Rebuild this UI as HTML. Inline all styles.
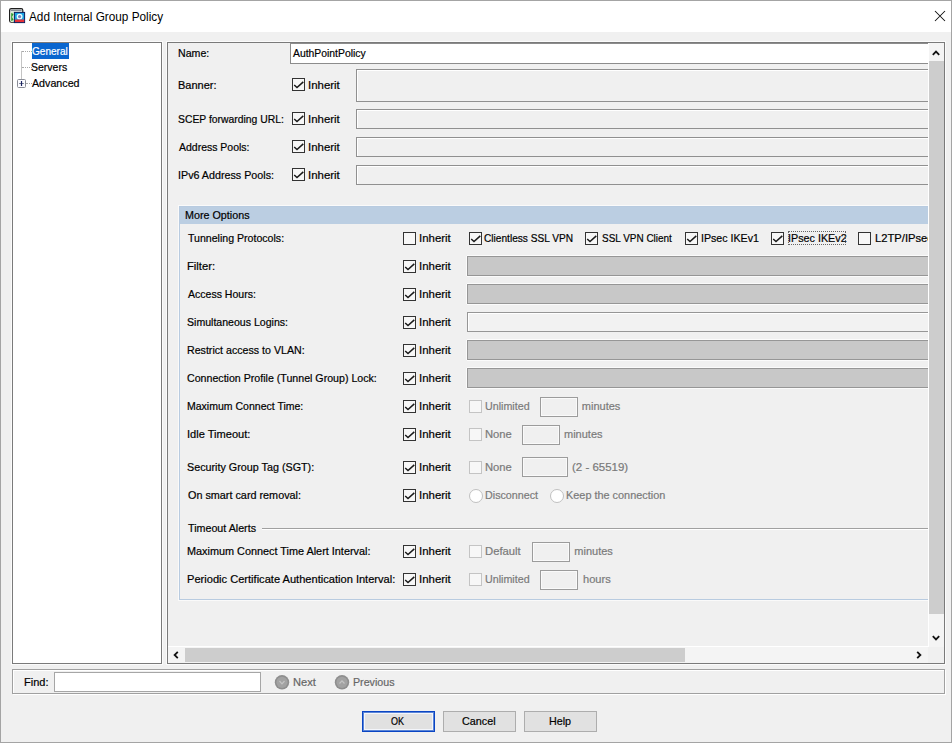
<!DOCTYPE html>
<html><head><meta charset="utf-8"><style>
html,body{margin:0;padding:0;width:952px;height:743px;overflow:hidden;background:#f0f0f0}
body{position:relative;font-family:"Liberation Sans",sans-serif}
.b{position:absolute;box-sizing:border-box}
.t{position:absolute;transform-origin:0 0;-webkit-text-stroke:0.2px currentColor;font-size:11px;line-height:13px;white-space:nowrap;color:#000}
.cb{position:absolute;width:13px;height:13px;box-sizing:border-box;border:1px solid #333;background:#f7f7f7}
.cb.dis{border-color:#c4c4c4;background:#f7f7f7}
.rd{position:absolute;width:14px;height:14px;box-sizing:border-box;border:1px solid #c0c0c0;border-radius:50%;background:#fff}
</style></head><body>
<div class="b" style="left:0px;top:0px;width:952px;height:743px;border:1px solid #a4a4a4;background:#f0f0f0"></div>
<div class="b" style="left:1px;top:1px;width:950px;height:31px;background:#fff"></div>
<svg style="position:absolute;left:9px;top:8px" width="17" height="16" viewBox="0 0 17 16">
<rect x="0.6" y="0.6" width="13.2" height="13.6" rx="1.6" fill="#f2f6f2" stroke="#1e1e1e" stroke-width="1.2"/>
<rect x="1.6" y="1.6" width="11" height="1.6" fill="#8a8f98"/>
<path d="M1.6 4 H4.8 V14 H1.6 Z" fill="#d8f0d0"/>
<path d="M2.2 5 L4.6 6 L3 9 L4.6 12 L2.2 13 Z" fill="#2e9a2e"/>
<rect x="5.4" y="4.4" width="10.2" height="10.2" fill="#1ea4e4" stroke="#0b1d5e" stroke-width="1"/>
<circle cx="10.6" cy="8.6" r="2.3" fill="#7a7fc0" stroke="#e6ffff" stroke-width="1.3"/>
<rect x="6" y="11.5" width="9.2" height="2.6" fill="#e63038"/>
</svg>
<div class="t" style="left:29px;top:9.5px;color:#000;font-size:12px;line-height:15px;-webkit-text-stroke:0;transform:scaleX(0.980);">Add Internal Group Policy</div>
<svg style="position:absolute;left:934px;top:10px" width="12" height="12"><path d="M1 1 L11 11 M11 1 L1 11" stroke="#111" stroke-width="1.05"/></svg>
<div class="b" style="left:12px;top:42px;width:150px;height:622px;border:1px solid #7a7a7a;background:#fff;box-shadow:0 0 0 1px #fbfbfb"></div>
<div class="b" style="left:32px;top:43px;width:37px;height:16px;background:#0a66cf"></div>
<div class="t" style="left:32px;top:45px;color:#fff;transform:scaleX(0.915);">General</div>
<div class="t" style="left:31px;top:61px;transform:scaleX(0.954);">Servers</div>
<div class="t" style="left:32px;top:77px;transform:scaleX(0.971);">Advanced</div>
<div class="b" style="left:21px;top:51px;width:1px;height:28px;background:#c4c4c4"></div>
<div class="b" style="left:22px;top:51px;width:10px;height:1px;border-top:1px dotted #a8a8a8"></div>
<div class="b" style="left:22px;top:67px;width:10px;height:1px;border-top:1px dotted #a8a8a8"></div>
<div class="b" style="left:26px;top:83px;width:6px;height:1px;border-top:1px dotted #a8a8a8"></div>
<svg style="position:absolute;left:17px;top:79px" width="9" height="9"><rect x="0.5" y="0.5" width="8" height="8" rx="1" fill="#fbfbff" stroke="#8a8d96"/><path d="M2.2 4.5 H6.8" stroke="#6a7690" stroke-width="1"/><path d="M4.5 2 V7" stroke="#1c2360" stroke-width="1.2"/></svg>
<div class="b" style="left:167px;top:42px;width:778px;height:622px;border:1px solid #7a7a7a;background:#f0f0f0;box-shadow:0 0 0 1px #fbfbfb"></div>
<div style="position:absolute;left:168px;top:43px;width:760px;height:603px;overflow:hidden"><div style="position:absolute;left:-168px;top:-43px;width:952px;height:743px">
<div class="t" style="left:178px;top:47px;transform:scaleX(0.965);">Name:</div>
<div class="b" style="left:290px;top:43px;width:651px;height:21px;background:#fff;border:1px solid #8c8c8c"></div>
<div class="t" style="left:293px;top:47px;transform:scaleX(0.943);">AuthPointPolicy</div>
<div class="t" style="left:178px;top:79px;">Banner:</div>
<div class="cb" style="left:292px;top:78px"><svg width="13" height="13" style="position:absolute;left:0;top:0"><path d="M1.2 6 L4 8.5 L10.3 2.9" fill="none" stroke="#1a1a1a" stroke-width="1.5"/></svg></div>
<div class="t" style="left:308px;top:79px;transform:scaleX(1.040);">Inherit</div>
<div class="b" style="left:356px;top:69px;width:585px;height:33px;background:#f0f0f0;border:1px solid #909090;box-shadow:inset 1px 1px 0 #fff"></div>
<div class="t" style="left:178px;top:113px;transform:scaleX(0.942);">SCEP forwarding URL:</div>
<div class="cb" style="left:292px;top:112px"><svg width="13" height="13" style="position:absolute;left:0;top:0"><path d="M1.2 6 L4 8.5 L10.3 2.9" fill="none" stroke="#1a1a1a" stroke-width="1.5"/></svg></div>
<div class="t" style="left:308px;top:113px;transform:scaleX(1.040);">Inherit</div>
<div class="b" style="left:356px;top:109px;width:585px;height:20px;background:#f0f0f0;border:1px solid #909090;box-shadow:inset 1px 1px 0 #fff"></div>
<div class="t" style="left:179px;top:141px;transform:scaleX(0.953);">Address Pools:</div>
<div class="cb" style="left:292px;top:140px"><svg width="13" height="13" style="position:absolute;left:0;top:0"><path d="M1.2 6 L4 8.5 L10.3 2.9" fill="none" stroke="#1a1a1a" stroke-width="1.5"/></svg></div>
<div class="t" style="left:308px;top:141px;transform:scaleX(1.040);">Inherit</div>
<div class="b" style="left:356px;top:137px;width:585px;height:20px;background:#f0f0f0;border:1px solid #909090;box-shadow:inset 1px 1px 0 #fff"></div>
<div class="t" style="left:178px;top:169px;transform:scaleX(0.975);">IPv6 Address Pools:</div>
<div class="cb" style="left:292px;top:168px"><svg width="13" height="13" style="position:absolute;left:0;top:0"><path d="M1.2 6 L4 8.5 L10.3 2.9" fill="none" stroke="#1a1a1a" stroke-width="1.5"/></svg></div>
<div class="t" style="left:308px;top:169px;transform:scaleX(1.040);">Inherit</div>
<div class="b" style="left:356px;top:165px;width:585px;height:20px;background:#f0f0f0;border:1px solid #909090;box-shadow:inset 1px 1px 0 #fff"></div>
<div class="b" style="left:179px;top:206px;width:782px;height:394px;border:1px solid #b8cbe0;box-shadow:0 0 0 1px #fafafa"></div>
<div class="b" style="left:180px;top:207px;width:781px;height:17px;background:#bbcee2"></div>
<div class="t" style="left:184.5px;top:209px;transform:scaleX(0.977);">More Options</div>
<div class="t" style="left:188px;top:232px;transform:scaleX(0.962);">Tunneling Protocols:</div>
<div class="cb" style="left:403px;top:232px"></div>
<div class="t" style="left:419px;top:232px;transform:scaleX(1.040);">Inherit</div>
<div class="cb" style="left:469px;top:232px"><svg width="13" height="13" style="position:absolute;left:0;top:0"><path d="M1.2 6 L4 8.5 L10.3 2.9" fill="none" stroke="#1a1a1a" stroke-width="1.5"/></svg></div>
<div class="t" style="left:484.2px;top:232px;transform:scaleX(0.921);">Clientless SSL VPN</div>
<div class="cb" style="left:585px;top:232px"><svg width="13" height="13" style="position:absolute;left:0;top:0"><path d="M1.2 6 L4 8.5 L10.3 2.9" fill="none" stroke="#1a1a1a" stroke-width="1.5"/></svg></div>
<div class="t" style="left:601.5px;top:232px;transform:scaleX(0.904);">SSL VPN Client</div>
<div class="cb" style="left:685px;top:232px"><svg width="13" height="13" style="position:absolute;left:0;top:0"><path d="M1.2 6 L4 8.5 L10.3 2.9" fill="none" stroke="#1a1a1a" stroke-width="1.5"/></svg></div>
<div class="t" style="left:701.2px;top:232px;transform:scaleX(0.967);">IPsec IKEv1</div>
<div class="cb" style="left:771px;top:232px"><svg width="13" height="13" style="position:absolute;left:0;top:0"><path d="M1.2 6 L4 8.5 L10.3 2.9" fill="none" stroke="#1a1a1a" stroke-width="1.5"/></svg></div>
<div class="t" style="left:787.8px;top:232px;transform:scaleX(0.979);">IPsec IKEv2</div>
<div class="b" style="left:788px;top:231px;width:58px;height:14px;border:1px dotted #666"></div>
<div class="cb" style="left:858px;top:232px"></div>
<div class="t" style="left:874.5px;top:232px;transform:scaleX(1.018);">L2TP/IPsec</div>
<div class="t" style="left:187px;top:260px;transform:scaleX(1.023);">Filter:</div>
<div class="cb" style="left:403px;top:260px"><svg width="13" height="13" style="position:absolute;left:0;top:0"><path d="M1.2 6 L4 8.5 L10.3 2.9" fill="none" stroke="#1a1a1a" stroke-width="1.5"/></svg></div>
<div class="t" style="left:419px;top:260px;transform:scaleX(1.040);">Inherit</div>
<div class="b" style="left:467px;top:256px;width:494px;height:20px;background:#c8c8c8;border:1px solid #969696;box-shadow:0 1px 0 #fbfbfb, 0 -1px 0 #fbfbfb, -1px 0 0 #fbfbfb"></div>
<div class="t" style="left:188px;top:288px;transform:scaleX(0.957);">Access Hours:</div>
<div class="cb" style="left:403px;top:288px"><svg width="13" height="13" style="position:absolute;left:0;top:0"><path d="M1.2 6 L4 8.5 L10.3 2.9" fill="none" stroke="#1a1a1a" stroke-width="1.5"/></svg></div>
<div class="t" style="left:419px;top:288px;transform:scaleX(1.040);">Inherit</div>
<div class="b" style="left:467px;top:284px;width:494px;height:20px;background:#c8c8c8;border:1px solid #969696;box-shadow:0 1px 0 #fbfbfb, 0 -1px 0 #fbfbfb, -1px 0 0 #fbfbfb"></div>
<div class="t" style="left:187px;top:316px;transform:scaleX(0.960);">Simultaneous Logins:</div>
<div class="cb" style="left:403px;top:316px"><svg width="13" height="13" style="position:absolute;left:0;top:0"><path d="M1.2 6 L4 8.5 L10.3 2.9" fill="none" stroke="#1a1a1a" stroke-width="1.5"/></svg></div>
<div class="t" style="left:419px;top:316px;transform:scaleX(1.040);">Inherit</div>
<div class="b" style="left:467px;top:312px;width:494px;height:20px;background:#f2f2f2;border:1px solid #969696;box-shadow:inset 1px 1px 0 #fff"></div>
<div class="t" style="left:187px;top:344px;transform:scaleX(0.967);">Restrict access to VLAN:</div>
<div class="cb" style="left:403px;top:344px"><svg width="13" height="13" style="position:absolute;left:0;top:0"><path d="M1.2 6 L4 8.5 L10.3 2.9" fill="none" stroke="#1a1a1a" stroke-width="1.5"/></svg></div>
<div class="t" style="left:419px;top:344px;transform:scaleX(1.040);">Inherit</div>
<div class="b" style="left:467px;top:340px;width:494px;height:20px;background:#c8c8c8;border:1px solid #969696;box-shadow:0 1px 0 #fbfbfb, 0 -1px 0 #fbfbfb, -1px 0 0 #fbfbfb"></div>
<div class="t" style="left:187px;top:372px;transform:scaleX(0.966);">Connection Profile (Tunnel Group) Lock:</div>
<div class="cb" style="left:403px;top:372px"><svg width="13" height="13" style="position:absolute;left:0;top:0"><path d="M1.2 6 L4 8.5 L10.3 2.9" fill="none" stroke="#1a1a1a" stroke-width="1.5"/></svg></div>
<div class="t" style="left:419px;top:372px;transform:scaleX(1.040);">Inherit</div>
<div class="b" style="left:467px;top:368px;width:494px;height:20px;background:#c8c8c8;border:1px solid #969696;box-shadow:0 1px 0 #fbfbfb, 0 -1px 0 #fbfbfb, -1px 0 0 #fbfbfb"></div>
<div class="t" style="left:187px;top:400px;transform:scaleX(0.956);">Maximum Connect Time:</div>
<div class="cb" style="left:403px;top:400px"><svg width="13" height="13" style="position:absolute;left:0;top:0"><path d="M1.2 6 L4 8.5 L10.3 2.9" fill="none" stroke="#1a1a1a" stroke-width="1.5"/></svg></div>
<div class="t" style="left:419px;top:400px;transform:scaleX(1.040);">Inherit</div>
<div class="cb dis" style="left:469px;top:400px"></div>
<div class="t" style="left:484.7px;top:400px;color:#7a7a7a;transform:scaleX(0.973);">Unlimited</div>
<div class="b" style="left:540px;top:397px;width:38px;height:20px;background:#f0f0f0;border:1px solid #9c9c9c;box-shadow:inset 0 0 0 1px #fafafa"></div>
<div class="t" style="left:581.8px;top:400px;color:#7a7a7a;">minutes</div>
<div class="t" style="left:187px;top:428px;transform:scaleX(1.007);">Idle Timeout:</div>
<div class="cb" style="left:403px;top:428px"><svg width="13" height="13" style="position:absolute;left:0;top:0"><path d="M1.2 6 L4 8.5 L10.3 2.9" fill="none" stroke="#1a1a1a" stroke-width="1.5"/></svg></div>
<div class="t" style="left:419px;top:428px;transform:scaleX(1.040);">Inherit</div>
<div class="cb dis" style="left:469px;top:428px"></div>
<div class="t" style="left:484.7px;top:428px;color:#7a7a7a;transform:scaleX(1.020);">None</div>
<div class="b" style="left:522px;top:425px;width:38px;height:20px;background:#f0f0f0;border:1px solid #9c9c9c;box-shadow:inset 0 0 0 1px #fafafa"></div>
<div class="t" style="left:564px;top:428px;color:#7a7a7a;">minutes</div>
<div class="t" style="left:187px;top:461px;transform:scaleX(0.978);">Security Group Tag (SGT):</div>
<div class="cb" style="left:403px;top:461px"><svg width="13" height="13" style="position:absolute;left:0;top:0"><path d="M1.2 6 L4 8.5 L10.3 2.9" fill="none" stroke="#1a1a1a" stroke-width="1.5"/></svg></div>
<div class="t" style="left:419px;top:461px;transform:scaleX(1.040);">Inherit</div>
<div class="cb dis" style="left:469px;top:461px"></div>
<div class="t" style="left:484.7px;top:461px;color:#7a7a7a;transform:scaleX(1.020);">None</div>
<div class="b" style="left:522px;top:457px;width:46px;height:20px;background:#f0f0f0;border:1px solid #9c9c9c;box-shadow:inset 0 0 0 1px #fafafa"></div>
<div class="t" style="left:571.7px;top:461px;color:#7a7a7a;transform:scaleX(1.044);">(2 - 65519)</div>
<div class="t" style="left:188px;top:489px;transform:scaleX(0.983);">On smart card removal:</div>
<div class="cb" style="left:403px;top:489px"><svg width="13" height="13" style="position:absolute;left:0;top:0"><path d="M1.2 6 L4 8.5 L10.3 2.9" fill="none" stroke="#1a1a1a" stroke-width="1.5"/></svg></div>
<div class="t" style="left:419px;top:489px;transform:scaleX(1.040);">Inherit</div>
<div class="rd" style="left:469px;top:489px"></div>
<div class="t" style="left:484.7px;top:489px;color:#7a7a7a;transform:scaleX(0.975);">Disconnect</div>
<div class="rd" style="left:550px;top:489px"></div>
<div class="t" style="left:565.5px;top:489px;color:#7a7a7a;transform:scaleX(0.990);">Keep the connection</div>
<div class="t" style="left:188px;top:522px;transform:scaleX(0.973);">Timeout Alerts</div>
<div class="b" style="left:262px;top:528px;width:699px;height:1px;background:#a0a0a0"></div>
<div class="b" style="left:262px;top:529px;width:699px;height:1px;background:#fff"></div>
<div class="t" style="left:187px;top:545px;transform:scaleX(0.987);">Maximum Connect Time Alert Interval:</div>
<div class="cb" style="left:403px;top:545px"><svg width="13" height="13" style="position:absolute;left:0;top:0"><path d="M1.2 6 L4 8.5 L10.3 2.9" fill="none" stroke="#1a1a1a" stroke-width="1.5"/></svg></div>
<div class="t" style="left:419px;top:545px;transform:scaleX(1.040);">Inherit</div>
<div class="cb dis" style="left:469px;top:545px"></div>
<div class="t" style="left:484.7px;top:545px;color:#7a7a7a;transform:scaleX(1.024);">Default</div>
<div class="b" style="left:532px;top:542px;width:38px;height:20px;background:#f0f0f0;border:1px solid #9c9c9c;box-shadow:inset 0 0 0 1px #fafafa"></div>
<div class="t" style="left:574.3px;top:545px;color:#7a7a7a;">minutes</div>
<div class="t" style="left:187px;top:573px;transform:scaleX(1.008);">Periodic Certificate Authentication Interval:</div>
<div class="cb" style="left:403px;top:573px"><svg width="13" height="13" style="position:absolute;left:0;top:0"><path d="M1.2 6 L4 8.5 L10.3 2.9" fill="none" stroke="#1a1a1a" stroke-width="1.5"/></svg></div>
<div class="t" style="left:419px;top:573px;transform:scaleX(1.040);">Inherit</div>
<div class="cb dis" style="left:469px;top:573px"></div>
<div class="t" style="left:484.7px;top:573px;color:#7a7a7a;transform:scaleX(0.973);">Unlimited</div>
<div class="b" style="left:540px;top:570px;width:38px;height:20px;background:#f0f0f0;border:1px solid #9c9c9c;box-shadow:inset 0 0 0 1px #fafafa"></div>
<div class="t" style="left:582.6px;top:573px;color:#7a7a7a;transform:scaleX(1.008);">hours</div>
</div></div>
<div class="b" style="left:928px;top:43px;width:16px;height:604px;background:#f0f0f0"></div>
<div class="b" style="left:929px;top:43px;width:15px;height:604px;background:#f4f4f4"></div>
<div class="b" style="left:929px;top:61px;width:15px;height:553px;background:#cdcdcd"></div>
<div class="b" style="left:928px;top:43px;width:1px;height:604px;background:#fff"></div>
<div class="b" style="left:168px;top:646px;width:761px;height:1px;background:#fff"></div>
<svg style="position:absolute;left:931px;top:49px" width="10" height="8"><path d="M1.8 5.8 L5 2.6 L8.2 5.8" fill="none" stroke="#111" stroke-width="1.8"/></svg>
<svg style="position:absolute;left:931px;top:634px" width="10" height="8"><path d="M1.8 2.2 L5 5.4 L8.2 2.2" fill="none" stroke="#111" stroke-width="1.8"/></svg>
<div class="b" style="left:168px;top:647px;width:760px;height:16px;background:#f0f0f0"></div>
<div class="b" style="left:168px;top:647px;width:760px;height:16px;background:#f4f4f4"></div>
<div class="b" style="left:185px;top:648px;width:500px;height:14px;background:#cdcdcd"></div>
<svg style="position:absolute;left:172px;top:650px" width="8" height="10"><path d="M5.8 1.8 L2.6 5 L5.8 8.2" fill="none" stroke="#111" stroke-width="1.8"/></svg>
<svg style="position:absolute;left:915px;top:650px" width="8" height="10"><path d="M2.2 1.8 L5.4 5 L2.2 8.2" fill="none" stroke="#111" stroke-width="1.8"/></svg>
<div class="b" style="left:12px;top:669px;width:933px;height:25px;border:1px solid #a0a0a0;box-shadow:inset 1px 1px 0 #fff, 1px 1px 0 #fff"></div>
<div class="t" style="left:24px;top:676px;">Find:</div>
<div class="b" style="left:54px;top:672px;width:207px;height:20px;background:#fff;border:1px solid #a6a6a6"></div>
<svg width="16" height="16" style="position:absolute;left:274px;top:674px"><circle cx="8" cy="8.3" r="7.2" fill="#8e8e8e"/><circle cx="8" cy="8.3" r="5.6" fill="#a2a2a2"/><path d="M5.5 7 L8 9.8 L10.5 7" fill="none" stroke="#c4c4c4" stroke-width="1.2"/></svg>
<div class="t" style="left:292.7px;top:676px;color:#666666;transform:scaleX(1.009);">Next</div>
<svg width="16" height="16" style="position:absolute;left:334px;top:674px"><circle cx="8" cy="8.3" r="7.2" fill="#8e8e8e"/><circle cx="8" cy="8.3" r="5.6" fill="#a2a2a2"/><path d="M5.5 9.5 L8 6.8 L10.5 9.5" fill="none" stroke="#c4c4c4" stroke-width="1.2"/></svg>
<div class="t" style="left:353.2px;top:676px;color:#666666;transform:scaleX(0.971);">Previous</div>
<div class="b" style="left:362px;top:711px;width:73px;height:21px;background:#e1e1e1;border:1px solid #0a45c4;box-shadow:inset 0 0 0 1px #5b85d6, inset 0 0 0 2px #f4f6fb"></div>
<div class="t" style="left:390.7px;top:715px;transform:scaleX(0.819);">OK</div>
<div class="b" style="left:443px;top:711px;width:73px;height:21px;background:#e1e1e1;border:1px solid #adadad"></div>
<div class="t" style="left:461.7px;top:715px;transform:scaleX(0.979);">Cancel</div>
<div class="b" style="left:524px;top:711px;width:73px;height:21px;background:#e1e1e1;border:1px solid #adadad"></div>
<div class="t" style="left:549px;top:715px;transform:scaleX(0.976);">Help</div>
</body></html>
